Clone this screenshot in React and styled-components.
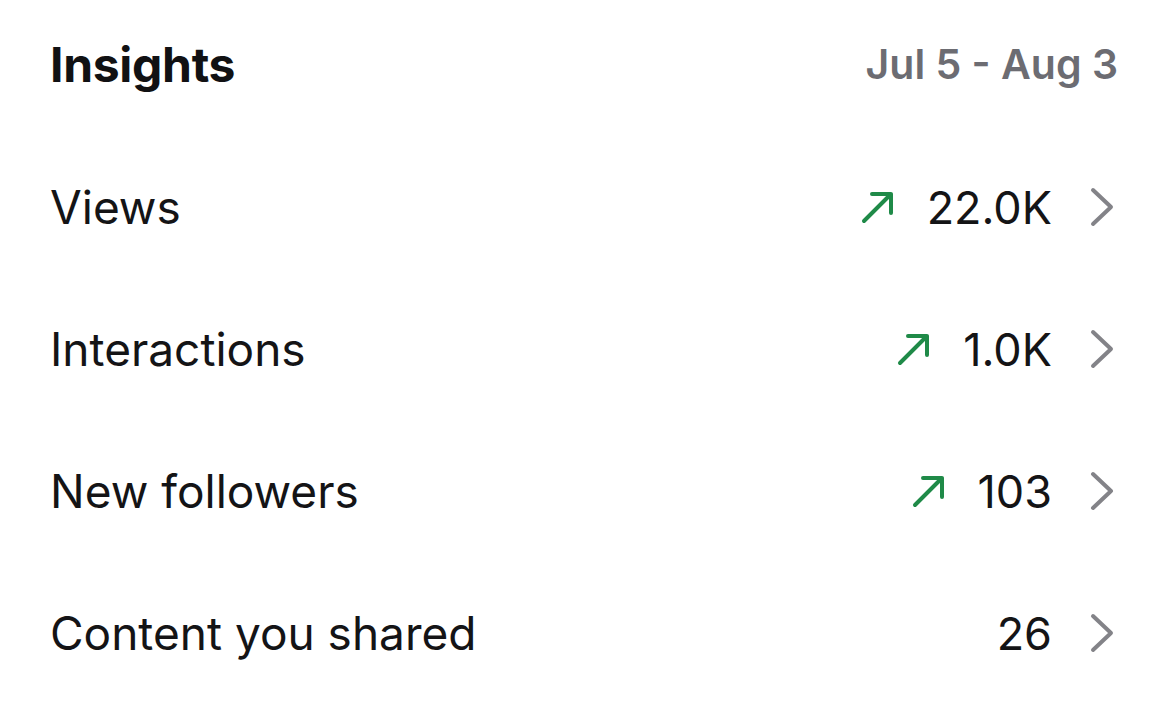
import styled, { createGlobalStyle } from "styled-components";

const GlobalStyle = createGlobalStyle`
  body {
    margin: 0;
    background: #ffffff;
    font-family: Inter, "Noto Sans", sans-serif;
    -webkit-font-smoothing: antialiased;
  }
`;

const Container = styled.div`
  width: 1170px;
  height: 728px;
  box-sizing: border-box;
  padding: 0 56px 0 50px;
  background: #fff;
`;

const Header = styled.div`
  height: 128px;
  display: flex;
  align-items: center;
  justify-content: space-between;
`;

const Title = styled.h1`
  margin: 0;
  font-size: 48px;
  font-weight: 700;
  color: #111113;
  letter-spacing: -0.3px;
`;

const DateRange = styled.span`
  font-size: 41px;
  font-weight: 600;
  color: #6c6c72;
  margin-right: -4px;
`;

const List = styled.div`
  margin-top: 8px;
  display: flex;
  flex-direction: column;
`;

const Row = styled.div`
  height: 142px;
  display: flex;
  align-items: center;
  justify-content: space-between;
`;

const Label = styled.span`
  font-size: 46px;
  font-weight: 400;
  color: #141416;
`;

const Right = styled.div`
  display: flex;
  align-items: center;
`;

const Trend = styled.svg`
  width: 34px;
  height: 34px;
  margin-right: 32px;
`;

const Value = styled.span`
  font-size: 45px;
  font-weight: 400;
  color: #141416;
`;

const Chevron = styled.svg`
  width: 24px;
  height: 40px;
  margin-left: 38px;
`;

const UpArrow = () => (
  <Trend viewBox="0 0 34 34" fill="none">
    <path
      d="M3 31 L30 4 M11 4 H30 V23"
      stroke="#1f8a48"
      strokeWidth="4"
      strokeLinecap="round"
      strokeLinejoin="round"
    />
  </Trend>
);

const ChevronRight = () => (
  <Chevron viewBox="0 0 24 40" fill="none">
    <path
      d="M3 3 L21 20 L3 37"
      stroke="#838388"
      strokeWidth="4"
      strokeLinecap="round"
      strokeLinejoin="round"
    />
  </Chevron>
);

const rows = [
  { label: "Views", value: "22.0K", up: true },
  { label: "Interactions", value: "1.0K", up: true },
  { label: "New followers", value: "103", up: true },
  { label: "Content you shared", value: "26", up: false },
];

const App = () => {
  return (
    <>
      <GlobalStyle />
      <Container>
        <Header>
          <Title>Insights</Title>
          <DateRange>Jul 5 - Aug 3</DateRange>
        </Header>
        <List>
          {rows.map((r) => (
            <Row key={r.label}>
              <Label>{r.label}</Label>
              <Right>
                {r.up && <UpArrow />}
                <Value>{r.value}</Value>
                <ChevronRight />
              </Right>
            </Row>
          ))}
        </List>
      </Container>
    </>
  );
};

export default App;
